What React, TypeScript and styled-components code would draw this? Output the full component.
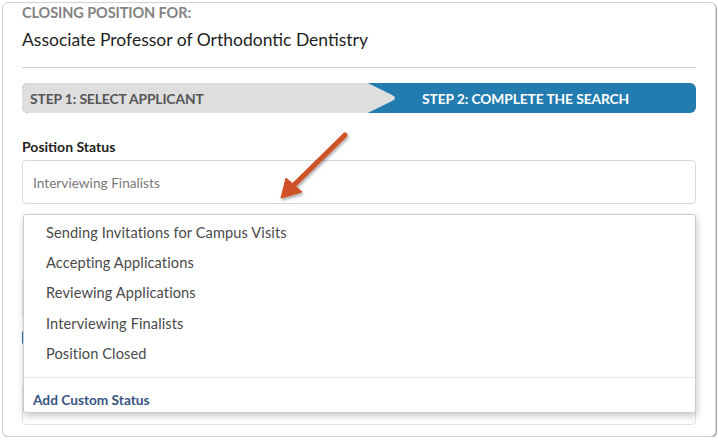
import { createGlobalStyle } from 'styled-components';
import styled from 'styled-components';

const GlobalStyle = createGlobalStyle`
  html, body {
    margin: 0;
    padding: 0;
    background: #fff;
  }
  body {
    font-family: Lato, 'Liberation Sans', sans-serif;
  }
  * {
    box-sizing: border-box;
  }
`;

const Card = styled.div`
  position: relative;
  margin: 2px 0 0 2px;
  width: 714px;
  height: 435px;
  padding: 1px 19px 0 19px;
  border: 1px solid #d2d2d2;
  border-radius: 6px;
  box-shadow: 1px 1px 1px rgba(0, 0, 0, 0.35);
  overflow: hidden;
  background: #fff;
`;

const Eyebrow = styled.div`
  font-size: 14.5px;
  font-weight: 700;
  line-height: 18px;
  color: #838383;
  letter-spacing: -0.1px;
`;

const Title = styled.h1`
  margin: 7px 0 0;
  font-size: 17.5px;
  font-weight: 400;
  line-height: 22px;
  color: #1f1f1f;
`;

const Divider = styled.hr`
  margin: 16px 0 0;
  border: 0;
  border-top: 1px solid #cfcfcf;
`;

const Steps = styled.div`
  display: flex;
  margin-top: 15px;
  height: 30px;
  border-radius: 6px;
  overflow: hidden;
  background: #237caf;
`;

const Step = styled.div<{ $active?: boolean }>`
  position: relative;
  display: flex;
  align-items: center;
  font-size: 13.8px;
  font-weight: 700;
  letter-spacing: -0.1px;
  color: ${(p) => (p.$active ? '#fff' : '#555')};
  background: ${(p) => (p.$active ? 'transparent' : '#dedede')};
  flex: ${(p) => (p.$active ? '1' : '0 0 345px')};
  padding-left: ${(p) => (p.$active ? '55px' : '8px')};

  ${(p) =>
    !p.$active &&
    `
    &::after {
      content: '';
      position: absolute;
      top: 0;
      right: -28px;
      width: 29px;
      height: 30px;
      background: #dedede;
      clip-path: polygon(0 0, 6% 0, 90% 40%, 98% 46%, 100% 50%, 98% 54%, 90% 60%, 6% 100%, 0 100%);
    }
  `}
`;

const FieldLabel = styled.div`
  margin-top: 25px;
  font-size: 14px;
  font-weight: 700;
  line-height: 18px;
  color: #222;
`;

const StatusField = styled.div`
  position: relative;
  margin-top: 4px;
`;

const SelectBox = styled.div`
  display: flex;
  align-items: center;
  height: 44px;
  padding-left: 10px;
  border: 1px solid #d9d9d9;
  border-radius: 4px;
  font-size: 13.7px;
  color: #7a7a7a;
`;

const DropDown = styled.div`
  position: absolute;
  z-index: 5;
  top: 54px;
  left: 1px;
  right: 0;
  background: #fff;
  border: 1px solid #cccccc;
  border-radius: 3px;
  box-shadow: 1px 3px 7px rgba(0, 0, 0, 0.22);
`;

const OptionList = styled.div`
  display: flex;
  flex-direction: column;
  padding: 2px 0 8px;
`;

const Option = styled.div`
  height: 30.4px;
  display: flex;
  align-items: center;
  padding-left: 22px;
  font-size: 14.6px;
  color: #4a4a4a;
  letter-spacing: 0.1px;
`;

const DropFooter = styled.div`
  border-top: 1px solid #e8e8e8;
  padding: 13px 9px 3px;
  line-height: 18px;
  font-size: 13.7px;
  font-weight: 700;
  color: #3a5582;
`;

// rest of the form, mostly covered by the open dropdown
const Hidden = styled.div`
  display: flex;
  flex-direction: column;
`;

const Input = styled.div<{ $gap: number }>`
  margin-top: ${(p) => p.$gap}px;
  height: 42px;
  border: 1px solid #e2e2e2;
  border-radius: 4px;
`;

const Toggle = styled.div`
  margin-top: 10px;
  width: 90px;
  height: 15px;
  border-radius: 3px;
  background: #237caf;
`;

const Pointer = styled.svg`
  position: absolute;
  z-index: 10;
  left: 265px;
  top: 116px;
  overflow: visible;
`;

const options = [
  'Sending Invitations for Campus Visits',
  'Accepting Applications',
  'Reviewing Applications',
  'Interviewing Finalists',
  'Position Closed',
];

export default function App() {
  return (
    <>
      <GlobalStyle />
      <Card>
        <Eyebrow>CLOSING POSITION FOR:</Eyebrow>
        <Title>Associate Professor of Orthodontic Dentistry</Title>
        <Divider />
        <Steps>
          <Step>STEP 1: SELECT APPLICANT</Step>
          <Step $active>STEP 2: COMPLETE THE SEARCH</Step>
        </Steps>
        <FieldLabel>Position Status</FieldLabel>
        <StatusField>
          <SelectBox>Interviewing Finalists</SelectBox>
          <DropDown>
            <OptionList>
              {options.map((o) => (
                <Option key={o}>{o}</Option>
              ))}
            </OptionList>
            <DropFooter>Add Custom Status</DropFooter>
          </DropDown>
          <Hidden>
            <Input $gap={74} />
            <Toggle />
            <Input $gap={38} />
          </Hidden>
        </StatusField>
        <Pointer width="90" height="90" viewBox="0 0 90 90">
          <defs>
            <filter id="sh" x="-30%" y="-30%" width="160%" height="160%">
              <feDropShadow dx="1" dy="2" stdDeviation="1.5" floodColor="#000" floodOpacity="0.35" />
            </filter>
          </defs>
          <g filter="url(#sh)" fill="#cf5128" stroke="#cf5128">
            <line x1="77" y1="16" x2="26" y2="66" strokeWidth="5" strokeLinecap="round" />
            <polygon points="13,79 18,59 34,73" strokeWidth="1" strokeLinejoin="round" />
          </g>
        </Pointer>
      </Card>
    </>
  );
}
